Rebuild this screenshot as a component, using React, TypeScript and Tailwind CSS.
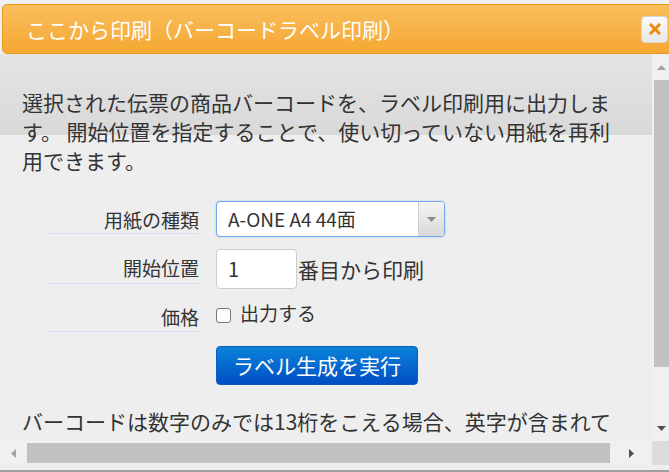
import React from "react";

function Tri({ dir, color }: { dir: "up" | "down" | "left" | "right"; color: string }) {
  const pts: Record<string, string> = {
    up: "0,5 4.5,0 9,5",
    down: "0,0 9,0 4.5,5",
    left: "5,0 5,9 0,4.5",
    right: "0,0 0,9 5,4.5",
  };
  const w = dir === "up" || dir === "down" ? 9 : 5;
  const h = dir === "up" || dir === "down" ? 5 : 9;
  return (
    <svg width={w} height={h} viewBox={`0 0 ${w} ${h}`}>
      <polygon points={pts[dir]} fill={color} />
    </svg>
  );
}

export default function App() {
  return (
    <div className="w-[669px] h-[472px] overflow-hidden bg-[#eeeeee] font-['Noto_Sans_CJK_JP',sans-serif] text-[#333333] flex flex-col">
      <div className="h-[4px] shrink-0 bg-[#f0f0f0]" />
      {/* Header */}
      <div className="ml-[2px] mr-[-8px] h-[50px] shrink-0 rounded-[5px] border border-[#e99a1c] bg-[linear-gradient(to_bottom,#f9be5c,#f5a733)] flex items-center pl-[23px] pr-[8px]">
        <span className="flex-1 text-white text-[21px] leading-[24px]">ここから印刷（バーコードラベル印刷）</span>
        <div className="w-[27px] h-[27px] rounded-[4px] border border-[#d6d6d6] bg-[linear-gradient(to_bottom,#fbfbfb,#e8e8e8)] flex items-center justify-center">
          <svg width="12" height="12" viewBox="0 0 12 12">
            <path d="M2 2 L10 10 M10 2 L2 10" stroke="#f08a0c" strokeWidth="3" strokeLinecap="square" />
          </svg>
        </div>
      </div>

      {/* Body with vertical scrollbar */}
      <div className="flex h-[387px] shrink-0">
        <div className="w-[652px] overflow-hidden bg-[linear-gradient(to_bottom,#e4e4e4,#d9d9d9)] bg-no-repeat bg-[length:100%_81px]">
          <p className="pt-[34px] pl-[22px] text-[21px] leading-[29px] whitespace-nowrap">
            選択された伝票の商品バーコードを、ラベル印刷用に出力しま
            <br />
            す。 開始位置を指定することで、使い切っていない用紙を再利
            <br />
            用できます。
          </p>

          <div className="mt-[26px] flex flex-col">
            {/* Row 1 */}
            <div className="flex">
              <div className="ml-[48px] w-[151px] h-[33px] border-b border-[#dadcf6] text-right text-[19px] leading-[24px] pt-[7px]">
                用紙の種類
              </div>
              <div className="ml-[17px] w-[229px] h-[36px] rounded-[4px] border border-[#74a7ef] bg-white flex shadow-[0_0_2px_rgba(80,140,230,0.45)]">
                <span className="flex-1 pl-[11px] text-[19px] leading-[34px]">A-ONE A4 44面</span>
                <div className="w-[26px] border-l border-[#cfcfcf] rounded-r-[3px] bg-[linear-gradient(to_bottom,#f4f4f4,#d9d9d9)] flex items-center justify-center">
                  <Tri dir="down" color="#8a8a8a" />
                </div>
              </div>
            </div>

            {/* Row 2 */}
            <div className="mt-[12px] flex">
              <div className="ml-[48px] w-[151px] h-[35px] border-b border-[#dadcf6] text-right text-[19px] leading-[24px] pt-[7px]">
                開始位置
              </div>
              <div className="ml-[17px] flex items-center">
                <div className="w-[81px] h-[40px] rounded-[4px] border border-[#cccccc] bg-white pl-[11px] text-[20px] leading-[38px]">
                  1
                </div>
                <span className="ml-[1px] text-[21px] leading-[28px]">番目から印刷</span>
              </div>
            </div>

            {/* Row 3 */}
            <div className="mt-[12px] flex">
              <div className="ml-[48px] w-[151px] h-[31px] border-b border-[#dadcf6] text-right text-[19px] leading-[24px] pt-[4px]">
                価格
              </div>
              <div className="ml-[17px] flex items-start">
                <div className="mt-[7px] w-[15px] h-[15px] rounded-[3px] border border-[#777777] bg-white" />
                <span className="ml-[9px] text-[19px] leading-[24px]">出力する</span>
              </div>
            </div>

            {/* Button */}
            <div className="mt-[14px] ml-[216px] w-[202px] h-[39px] rounded-[4px] border border-[#0a5fc0] bg-[linear-gradient(to_bottom,#0b82da,#004fc4)] text-white text-[21px] flex items-center justify-center">
              ラベル生成を実行
            </div>
          </div>

          <p className="mt-[22px] pl-[22px] text-[21px] leading-[29px] whitespace-nowrap">
            バーコードは数字のみでは13桁をこえる場合、英字が含まれて
          </p>
        </div>

        {/* Vertical scrollbar */}
        <div className="w-[17px] bg-[#f0f0f0] flex flex-col">
          <div className="h-[26px] flex items-center justify-center pl-[2px]">
            <Tri dir="up" color="#a3a3a3" />
          </div>
          <div className="ml-[2px] h-[287px] bg-[#c1c1c1]" />
          <div className="flex-1" />
          <div className="h-[26px] flex items-center justify-center pl-[2px]">
            <Tri dir="down" color="#505050" />
          </div>
        </div>
      </div>

      {/* Horizontal scrollbar */}
      <div className="h-[24px] shrink-0 flex">
        <div className="w-[652px] bg-[#f0f0f0] flex items-center">
          <div className="w-[27px] flex justify-center">
            <Tri dir="left" color="#a3a3a3" />
          </div>
          <div className="w-[583px] h-[20px] bg-[#c1c1c1]" />
          <div className="flex-1 flex justify-center">
            <Tri dir="right" color="#505050" />
          </div>
        </div>
        <div className="w-[17px] bg-[#dcdcdc]" />
      </div>
      <div className="h-[5px] shrink-0 bg-[#eeeeee]" />
      <div className="h-[2px] shrink-0 bg-[#a0a0a0]" />
    </div>
  );
}
